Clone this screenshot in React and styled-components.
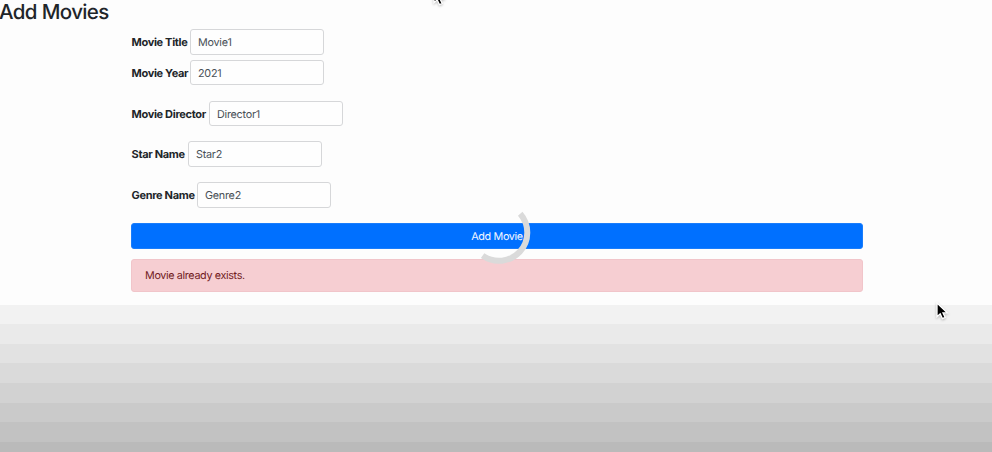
import React from 'react';
import styled, { createGlobalStyle } from 'styled-components';

const GlobalStyle = createGlobalStyle`
  * { box-sizing: border-box; }
  body { margin: 0; overflow: hidden; background: #fdfdfd; }
`;

const Page = styled.main`
  position: relative;
  width: 992px;
  height: 452px;
  overflow: hidden;
  display: flex;
  flex-direction: column;
  background: #fdfdfd;
  color: #212529;
  font-family: Inter, "Liberation Sans", sans-serif;
  font-size: 10.8px;
  letter-spacing: -0.36px;
  text-rendering: geometricPrecision;
`;

const Content = styled.section`
  height: 305px;
  flex: none;
`;

const Title = styled.h1`
  margin: 0 0 0 -1px;
  height: 29px;
  font-size: 20.5px;
  font-weight: 500;
  line-height: 24px;
  letter-spacing: -0.62px;
  white-space: nowrap;
`;

const Form = styled.form`
  width: 732px;
  margin-left: 131px;
  display: flex;
  flex-direction: column;
`;

const Field = styled.div`
  display: flex;
  align-items: center;
  height: ${(p) => p.$height}px;
  margin-bottom: ${(p) => p.$gap}px;
`;

const Label = styled.label`
  width: ${(p) => p.$width}px;
  padding: 0 0 0 0.5px;
  flex: none;
  font-size: 11px;
  font-weight: 700;
  line-height: 14px;
  white-space: nowrap;
  letter-spacing: -0.32px;
`;

const Input = styled.input`
  width: 134px;
  height: 100%;
  padding: 1px 7px 0;
  border: 1px solid #d6d7d9;
  border-radius: 3px;
  background: #fefefe;
  color: #495057;
  font: inherit;
  letter-spacing: -0.25px;
  text-rendering: inherit;
  outline: none;
`;

const SubmitButton = styled.button`
  height: 26px;
  padding: 1px 0 0;
  border: 1px solid #1a7dfb;
  border-radius: 3px;
  background: #0070ff;
  color: #f4f8ff;
  font: inherit;
  letter-spacing: inherit;
  text-rendering: inherit;
`;

const Alert = styled.div`
  height: 33px;
  margin-top: 10px;
  padding: 0 13px;
  border: 1px solid #f1c5ca;
  border-radius: 3px;
  background: #f6ced2;
  color: #721c24;
  line-height: 32px;
`;

const Shade = styled.div`
  flex: none;
  height: ${(p) => p.$height}px;
  background: ${(p) => p.$color};
`;

const Spinner = styled.svg`
  position: absolute;
  left: 466px;
  top: 200px;
`;

const Cursor = styled.svg`
  position: absolute;
  left: ${(p) => p.$x}px;
  top: ${(p) => p.$y}px;
  filter: drop-shadow(0 1px 1px rgba(0, 0, 0, 0.25));
`;

const fields = [
  { label: 'Movie Title', value: 'Movie1', width: 59, height: 26, gap: 5 },
  { label: 'Movie Year', value: '2021', width: 59, height: 25, gap: 16 },
  { label: 'Movie Director', value: 'Director1', width: 78, height: 25, gap: 15 },
  { label: 'Star Name', value: 'Star2', width: 57, height: 26, gap: 15 },
  { label: 'Genre Name', value: 'Genre2', width: 66, height: 26, gap: 15 },
];

const shades = [
  ['#f2f2f2', 19], ['#eaeaea', 20], ['#e2e2e2', 19], ['#dadada', 20],
  ['#d2d2d2', 20], ['#cacaca', 19], ['#c2c2c2', 20], ['#bababa', 10],
];

function Pointer({ x, y }) {
  return (
    <Cursor $x={x} $y={y} width="13" height="20" viewBox="0 0 13 20">
      <path
        d="M1 1V14.8L4.2 11.8L6.4 16.6L9.2 15.4L7 10.9H11.3Z"
        fill="#000"
        stroke="#fff"
        strokeWidth="1.3"
      />
    </Cursor>
  );
}

export default function App() {
  return (
    <Page>
      <GlobalStyle />
      <Content>
        <Title>Add Movies</Title>
        <Form>
          {fields.map((f) => (
            <Field key={f.label} $height={f.height} $gap={f.gap}>
              <Label $width={f.width}>{f.label}</Label>
              <Input defaultValue={f.value} aria-label={f.label} />
            </Field>
          ))}
          <SubmitButton type="button">Add Movie</SubmitButton>
          <Alert>Movie already exists.</Alert>
        </Form>
      </Content>
      {shades.map(([color, height]) => (
        <Shade key={color} $color={color} $height={height} />
      ))}
      <Spinner width="66" height="66" viewBox="0 0 66 66">
        <path d="M54.2 13.8A28.3 28.3 0 0 1 16.6 55.6" fill="none" stroke="#dadada" strokeWidth="6" />
      </Spinner>
      <Pointer x={936} y={302} />
      <Pointer x={433} y={-12} />
    </Page>
  );
}
